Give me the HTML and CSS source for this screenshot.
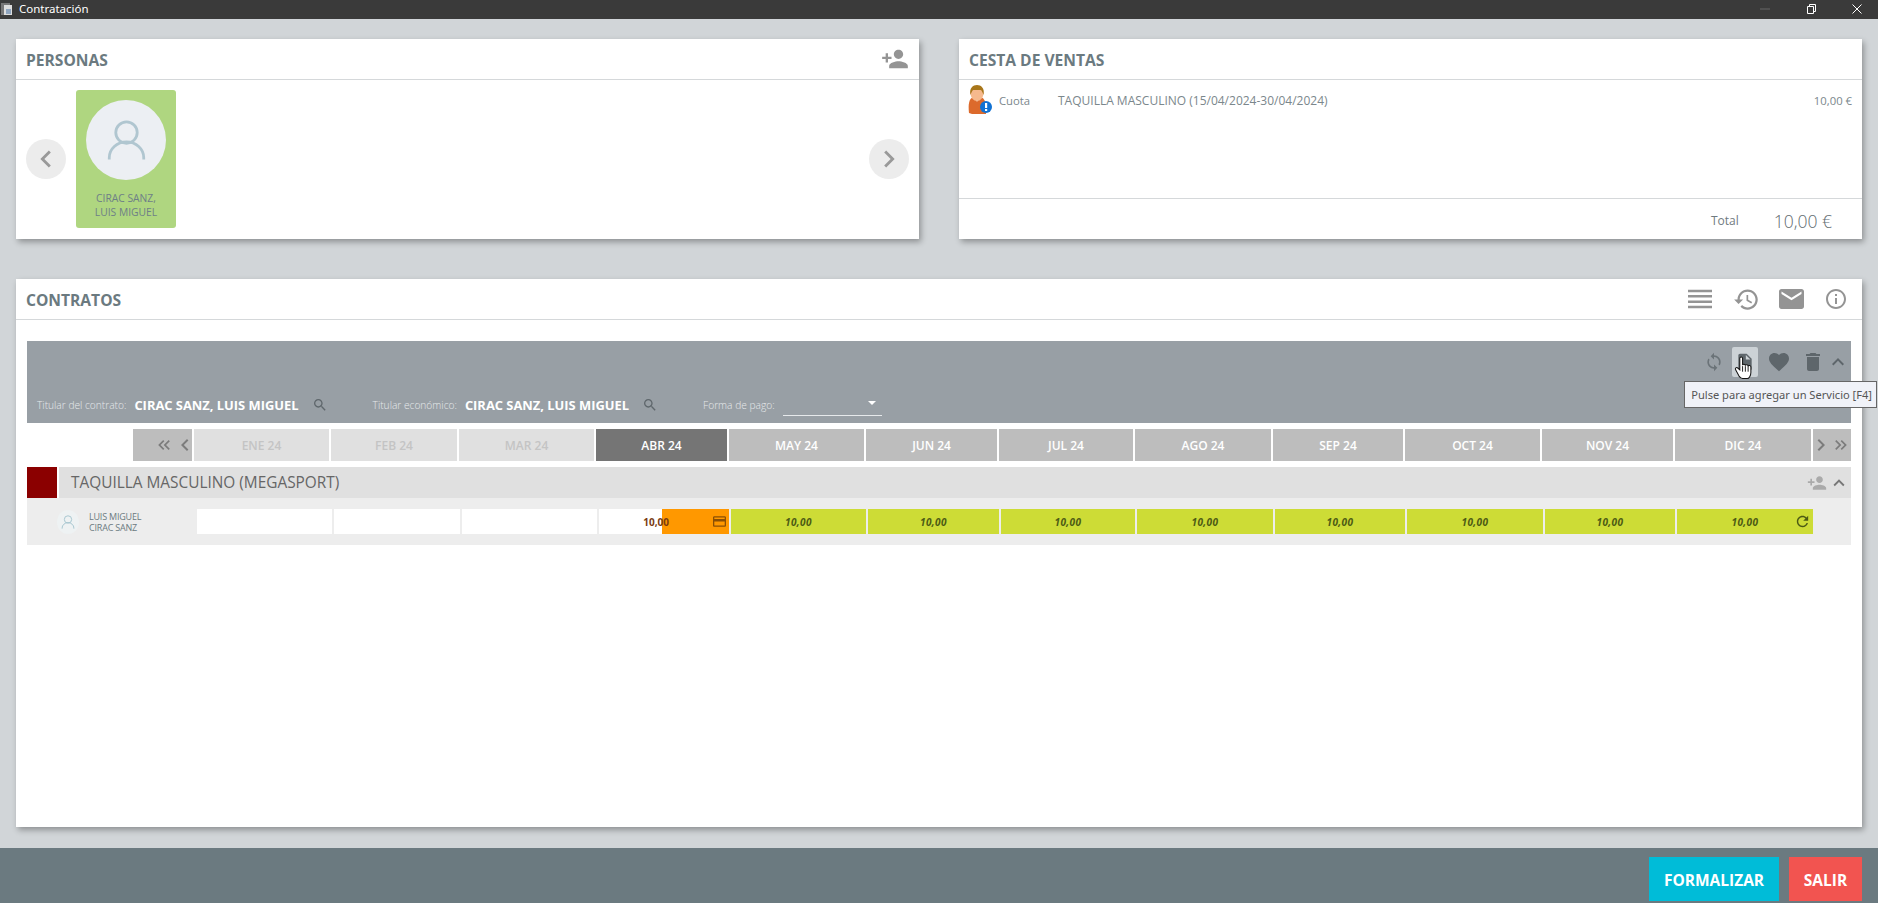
FILE: index.html
```html
<!DOCTYPE html>
<html lang="es">
<head>
<meta charset="utf-8"/>
<title>Contratación</title>
<link rel="stylesheet" href="styles.css">
</head>
<body>
<svg class="sprite" width="0" height="0">
    <symbol id="i-add" viewBox="0 0 24 24"><path d="M15 12c2.21 0 4-1.79 4-4s-1.79-4-4-4-4 1.79-4 4 1.79 4 4 4zm-9-2V7H4v3H1v2h3v3h2v-3h3v-2H6zm9 4c-2.67 0-8 1.34-8 4v2h16v-2c0-2.66-5.33-4-8-4z"/></symbol>
    <symbol id="i-history" viewBox="0 0 24 24"><path d="M13 3c-4.97 0-9 4.03-9 9H1l3.89 3.89.07.14L9 12H6c0-3.87 3.13-7 7-7s7 3.13 7 7-3.13 7-7 7c-1.93 0-3.68-.79-4.94-2.06l-1.42 1.42C8.27 19.99 10.51 21 13 21c4.97 0 9-4.03 9-9s-4.03-9-9-9zm-1 5v5l4.28 2.54.72-1.21-3.5-2.08V8H12z"/></symbol>
    <symbol id="i-mail" viewBox="2 4 20 16"><path d="M20 4H4c-1.1 0-1.99.9-1.99 2L2 18c0 1.1.9 2 2 2h16c1.1 0 2-.9 2-2V6c0-1.1-.9-2-2-2zm0 4l-8 5-8-5V6l8 5 8-5v2z"/></symbol>
    <symbol id="i-info" viewBox="2 2 20 20"><path d="M11 17h2v-6h-2v6zm1-15C6.48 2 2 6.48 2 12s4.48 10 10 10 10-4.48 10-10S17.52 2 12 2zm0 18c-4.41 0-8-3.59-8-8s3.59-8 8-8 8 3.59 8 8-3.59 8-8 8zM11 9h2V7h-2v2z"/></symbol>
    <symbol id="i-sync" viewBox="0 0 24 24"><path d="M12 4V1L8 5l4 4V6c3.31 0 6 2.69 6 6 0 1.01-.25 1.97-.7 2.8l1.46 1.46C19.54 15.03 20 13.57 20 12c0-4.42-3.58-8-8-8zm0 14c-3.31 0-6-2.69-6-6 0-1.01.25-1.97.7-2.8L5.24 7.74C4.46 8.97 4 10.43 4 12c0 4.42 3.58 8 8 8v3l4-4-4-4v3z"/></symbol>
    <symbol id="i-doc" viewBox="0 0 24 24"><path d="M6 2c-1.1 0-1.99.9-1.99 2L4 20c0 1.1.89 2 1.99 2H18c1.1 0 2-.9 2-2V8l-6-6H6zm7 7V3.5L18.5 9H13z"/></symbol>
    <symbol id="i-heart" viewBox="0 0 24 24"><path d="M12 21.35l-1.45-1.32C5.4 15.36 2 12.28 2 8.5 2 5.42 4.42 3 7.5 3c1.74 0 3.41.81 4.5 2.09C13.09 3.81 14.76 3 16.5 3 19.58 3 22 5.42 22 8.5c0 3.78-3.4 6.86-8.55 11.54L12 21.35z"/></symbol>
    <symbol id="i-trash" viewBox="0 0 24 24"><path d="M6 19c0 1.1.9 2 2 2h8c1.1 0 2-.9 2-2V7H6v12zM19 4h-3.5l-1-1h-5l-1 1H5v2h14V4z"/></symbol>
    <symbol id="i-up" viewBox="0 0 24 24"><path d="M7.41 15.41L12 10.83l4.59 4.58L18 14l-6-6-6 6z"/></symbol>
    <symbol id="i-left" viewBox="0 0 24 24"><path d="M15.41 7.41L14 6l-6 6 6 6 1.41-1.41L10.83 12z"/></symbol>
    <symbol id="i-right" viewBox="0 0 24 24"><path d="M8.59 16.59L10 18l6-6-6-6-1.41 1.41L13.17 12z"/></symbol>
    <symbol id="i-dleft" viewBox="0 0 24 24"><path d="M17.59 18L19 16.59 14.42 12 19 7.41 17.59 6l-6 6zM11 18l1.41-1.41L7.83 12l4.58-4.59L11 6l-6 6z"/></symbol>
    <symbol id="i-dright" viewBox="0 0 24 24"><path d="M6.41 6L5 7.41 9.58 12 5 16.59 6.41 18l6-6zM13 6l-1.41 1.41L16.17 12l-4.58 4.59L13 18l6-6z"/></symbol>
    <symbol id="i-card" viewBox="2 4 20 16"><path d="M20 4H4c-1.11 0-1.99.89-1.99 2L2 18c0 1.11.89 2 2 2h16c1.11 0 2-.89 2-2V6c0-1.11-.89-2-2-2zm0 14H4v-6h16v6zm0-10H4V6h16v2z"/></symbol>
    <symbol id="i-refresh" viewBox="0 0 24 24"><path d="M17.65 6.35C16.2 4.9 14.21 4 12 4c-4.42 0-7.99 3.58-7.99 8s3.57 8 7.99 8c3.73 0 6.84-2.55 7.73-6h-2.08c-.82 2.33-3.04 4-5.65 4-3.31 0-6-2.69-6-6s2.69-6 6-6c1.66 0 3.14.69 4.22 1.78L13 11h7V4l-2.35 2.35z"/></symbol>
    <symbol id="i-search" viewBox="0 0 24 24"><path d="M15.5 14h-.79l-.28-.27C15.41 12.59 16 11.11 16 9.5 16 5.91 13.09 3 9.5 3S3 5.91 3 9.5 5.91 16 9.5 16c1.61 0 3.09-.59 4.23-1.57l.27.28v.79l5 4.99L20.49 19l-4.99-5zm-6 0C7.01 14 5 11.99 5 9.5S7.01 5 9.5 5 14 7.01 14 9.5 11.99 14 9.5 14z"/></symbol>
    <symbol id="i-user" viewBox="0 0 44 44"><circle cx="22" cy="14" r="11.5" fill="none" stroke="currentColor" stroke-width="3"/><path d="M3.5 43v-2a18.500 17 0 0 1 37 0v2" fill="none" stroke="currentColor" stroke-width="3"/></symbol>
</svg>

<header class="titlebar">
    <svg class="app_ico" viewBox="0 0 12 14"><rect x="0" y="1" width="9" height="12" fill="#777"/><rect x="3" y="3" width="8" height="10" fill="#ddd"/><rect x="5" y="7" width="5" height="5" fill="#8fa5bf"/></svg>
    <span class="app_name">Contratación</span>
    <div class="win_btns">
        <svg class="win_ico" viewBox="0 0 10 10"><path d="M0 5h10" stroke="#666"/></svg>
        <svg class="win_ico" viewBox="0 0 10 10"><path d="M1.500 2.500h6v7h-6zM3.500 2.500v-2h6v7h-2" fill="none" stroke="#fff"/></svg>
        <svg class="win_ico" viewBox="0 0 10 10"><path d="M0.500 0.500l9 9M9.500 0.500l-9 9" stroke="#fff"/></svg>
    </div>
</header>

<main class="main">
    <div class="top_row">
        <section class="panel">
            <div class="panel_head">
                <h2>PERSONAS</h2>
                <svg class="head_ico add_ico"><use href="#i-add"/></svg>
            </div>
            <div class="personas">
                <button class="round_btn"><svg><use href="#i-left"/></svg></button>
                <div class="persona_list">
                    <div class="persona">
                        <div class="persona_pic"><svg><use href="#i-user"/></svg></div>
                        <div class="persona_name">CIRAC SANZ,<br>LUIS MIGUEL</div>
                    </div>
                </div>
                <button class="round_btn"><svg><use href="#i-right"/></svg></button>
            </div>
        </section>

        <section class="panel">
            <div class="panel_head">
                <h2>CESTA DE VENTAS</h2>
            </div>
            <div class="cesta">
                <div class="cesta_line">
                    <svg class="cesta_ico" viewBox="0 0 24 30">
                        <path d="M1 28c-1-9 0-14 4-16h8c4 2 5 6 5 10v7H4z" fill="#dc6a2c"/>
                        <path d="M6 12h6l-3 5z" fill="#f3d6c4"/>
                        <ellipse cx="9" cy="8.500" rx="6.500" ry="7.500" fill="#f6b98d"/>
                        <path d="M2.500 10C1 3 5 0 9 0s8 3 6.500 10c-1-3-2-5-3-5h-7c-1 0-2 2-3 5z" fill="#a8761a"/>
                        <circle cx="18" cy="22" r="6" fill="#1272d3"/>
                        <rect x="17" y="18" width="2.200" height="5" fill="#fff"/>
                        <rect x="17" y="24" width="2.200" height="2" fill="#fff"/>
                    </svg>
                    <span class="cesta_tipo">Cuota</span>
                    <span class="cesta_desc">TAQUILLA MASCULINO (15/04/2024-30/04/2024)</span>
                    <span class="cesta_imp">10,00 €</span>
                </div>
            </div>
            <div class="cesta_total">
                <span class="total_lbl">Total</span>
                <span class="total_num">10,00 €</span>
            </div>
        </section>
    </div>

    <section class="panel contratos">
        <div class="panel_head">
            <h2>CONTRATOS</h2>
            <div class="head_tools">
                <svg class="head_ico menu_ico" viewBox="0 0 24 20"><path d="M0 2h24M0 7.300h24M0 12.700h24M0 18h24" stroke="currentColor" stroke-width="2.600"/></svg>
                <svg class="head_ico hist_ico"><use href="#i-history"/></svg>
                <svg class="head_ico mail_ico"><use href="#i-mail"/></svg>
                <svg class="head_ico info_ico"><use href="#i-info"/></svg>
            </div>
        </div>
        <div class="contratos_body">
            <div class="contrato_bar">
                <div class="bar_tools">
                    <svg class="tool sync_tool"><use href="#i-sync"/></svg>
                    <span class="tool_box"><svg class="tool"><use href="#i-doc"/></svg></span>
                    <svg class="tool heart_tool"><use href="#i-heart"/></svg>
                    <svg class="tool trash_tool"><use href="#i-trash"/></svg>
                    <svg class="tool up_tool"><use href="#i-up"/></svg>
                </div>
                <div class="bar_fields">
                    <span class="fld_lbl">Titular del contrato:</span>
                    <strong class="fld_val">CIRAC SANZ, LUIS MIGUEL</strong>
                    <svg class="fld_search"><use href="#i-search"/></svg>
                    <span class="fld_lbl fld_2">Titular económico:</span>
                    <strong class="fld_val">CIRAC SANZ, LUIS MIGUEL</strong>
                    <svg class="fld_search"><use href="#i-search"/></svg>
                    <span class="fld_lbl fld_2">Forma de pago:</span>
                    <span class="fld_select"></span>
                </div>
                <svg class="hand" viewBox="0 0 20 26">
                    <path d="M6 2.500c0-2 3-2 3 0V10c0-1.500 3-1.500 3 .5 0-1.500 3-1.500 3 .5 .5-1 3-1 3 1v6c0 3-2 6.500-4 6.500H9c-2 0-3-1.500-4-3L1.500 15c-1-1.500.8-3.200 2.300-2L6 15z" fill="#fff" stroke="#111" stroke-width="1.100"/>
                    <path d="M9 11v6M12 11v6M15 11v6" stroke="#111" fill="none"/>
                </svg>
                <div class="tooltip">Pulse para agregar un Servicio [F4]</div>
            </div>

            <div class="months">
                <div class="m_nav m_nav_l"><svg class="n_two"><use href="#i-dleft"/></svg><svg class="n_one"><use href="#i-left"/></svg></div>
                <div class="m m_off">ENE 24</div>
                <div class="m m_off">FEB 24</div>
                <div class="m m_off">MAR 24</div>
                <div class="m m_on">ABR 24</div>
                <div class="m">MAY 24</div>
                <div class="m">JUN 24</div>
                <div class="m">JUL 24</div>
                <div class="m">AGO 24</div>
                <div class="m">SEP 24</div>
                <div class="m">OCT 24</div>
                <div class="m">NOV 24</div>
                <div class="m">DIC 24</div>
                <div class="m_nav m_nav_r"><svg class="n_one"><use href="#i-right"/></svg><svg class="n_two"><use href="#i-dright"/></svg></div>
            </div>

            <div class="servicio">
                <span class="serv_color"></span>
                <div class="serv_title">
                    <span>TAQUILLA MASCULINO (MEGASPORT)</span>
                    <svg class="serv_add"><use href="#i-add"/></svg>
                    <svg class="serv_up"><use href="#i-up"/></svg>
                </div>
            </div>

            <div class="linea">
                <div class="linea_user">
                    <span class="linea_pic"><svg><use href="#i-user"/></svg></span>
                    <span class="linea_name">LUIS MIGUEL<br>CIRAC SANZ</span>
                </div>
                <div class="cells">
                    <div class="cell"></div>
                    <div class="cell"></div>
                    <div class="cell"></div>
                    <div class="cell cell_abr">
                        <span class="abr_num">10,00</span>
                        <span class="abr_pay"><svg><use href="#i-card"/></svg></span>
                    </div>
                    <div class="cell cell_ok">10,00</div>
                    <div class="cell cell_ok">10,00</div>
                    <div class="cell cell_ok">10,00</div>
                    <div class="cell cell_ok">10,00</div>
                    <div class="cell cell_ok">10,00</div>
                    <div class="cell cell_ok">10,00</div>
                    <div class="cell cell_ok">10,00</div>
                    <div class="cell cell_ok">10,00<svg class="cell_renew"><use href="#i-refresh"/></svg></div>
                </div>
            </div>
        </div>
    </section>
</main>

<footer class="footer">
    <button class="btn btn_form">FORMALIZAR</button>
    <button class="btn btn_salir">SALIR</button>
</footer>
</body>
</html>
```

FILE: styles.css
```css
*{margin:0;padding:0;box-sizing:border-box;}
html,body{height:100%;}
body{
    display:flex;flex-direction:column;
    overflow:hidden;
    background:#d1d5d8;
    font-family:"Open Sans","Noto Sans",sans-serif;
    color:#6b7a80;}
.sprite{position:absolute;}
svg{display:block;fill:currentColor;}
button{border:0;font-family:inherit;}

/* title bar */
.titlebar{
    flex:none;
    display:flex;align-items:center;
    height:19px;
    padding-bottom:2px;
    background:#3a3a3a;
    color:#fff;}
.app_ico{width:12px;height:14px;margin:0 6px 0 1px;}
.app_name{font-family:"Noto Sans",sans-serif;font-size:11.500px;}
.win_btns{display:flex;gap:36px;margin-left:auto;margin-right:16px;}
.win_ico{width:10px;height:10px;}

/* panels */
.main{
    flex:1;
    display:flex;flex-direction:column;gap:40px;
    min-height:0;
    padding:20px 16px 21px;}
.top_row{
    flex:none;
    display:grid;grid-template-columns:903px 903px;gap:40px;
    height:200px;}
.panel{
    display:flex;flex-direction:column;
    background:#fff;
    box-shadow:2px 3px 6px rgba(0,0,0,.32);}
.panel_head{
    flex:none;
    display:flex;justify-content:space-between;align-items:center;
    height:41px;
    padding:0 10px;
    border-bottom:1px solid #d5d8da;}
.panel_head h2{padding-top:2px;font-size:15.600px;font-weight:700;color:#6b7a80;}
.head_ico{color:#949494;}
.add_ico{width:28px;height:28px;}

/* personas */
.personas{
    flex:1;
    display:flex;align-items:center;
    padding:0 10px 1px;}
.round_btn{
    flex:none;
    display:flex;justify-content:center;align-items:center;
    width:40px;height:40px;
    background:#ececec;
    border-radius:50%;
    color:#999;}
.round_btn svg{width:34px;height:34px;}
.persona_list{flex:1;padding-left:10px;}
.persona{
    width:100px;height:138px;
    padding-top:10px;
    background:#afd680;
    border-radius:3px;
    text-align:center;}
.persona_pic{
    display:flex;justify-content:center;align-items:center;
    width:80px;height:80px;
    margin:0 auto 11px;
    background:#eceff3;
    border-radius:50%;
    color:#b0c6d0;}
.persona_pic svg{width:41px;height:44px;}
.persona_name{font-size:10.300px;line-height:14px;color:#6e7f87;}

/* cesta */
.cesta{flex:1;padding:5px 10px 0 9px;}
.cesta_line{
    display:flex;align-items:flex-start;
    font-size:11.300px;
    color:#7b878c;}
.cesta_ico{flex:none;width:24px;height:30px;margin-right:7px;}
.cesta_tipo{width:59px;padding-top:8px;}
.cesta_desc{flex:1;padding-top:7px;font-size:12px;}
.cesta_imp{padding-top:8px;}
.cesta_total{
    flex:none;
    display:flex;justify-content:flex-end;align-items:center;gap:35px;
    height:41px;
    padding:3px 30px 0 0;
    border-top:1px solid #d5d8da;
    color:#6f7b80;}
.total_lbl{font-size:12px;}
.total_num{font-size:17.500px;font-weight:300;color:#5f6b70;}

/* contratos */
.contratos{flex:1;min-height:0;}
.head_tools{display:flex;align-items:center;padding-right:6px;}
.menu_ico{width:24px;height:20px;}
.hist_ico{width:27px;height:27px;margin-left:21px;}
.mail_ico{width:25px;height:20px;margin-left:19px;}
.info_ico{width:20px;height:20px;margin-left:22px;}
.contratos_body{padding:21px 11px 0;}

.contrato_bar{
    position:relative;
    display:flex;flex-direction:column;justify-content:space-between;
    height:82px;
    padding:6px 1px 6px 10px;
    background:#989fa5;}
.bar_tools{display:flex;justify-content:flex-end;align-items:center;height:30px;color:#5e666b;}
.tool{width:20px;height:20px;}
.sync_tool{color:#6b7378;}
.tool_box{
    display:flex;justify-content:center;align-items:center;
    width:26px;height:30px;
    margin-left:8px;
    background:#ccd2d6;
    border-radius:2px;}
.heart_tool{width:24px;height:24px;margin-left:9px;}
.trash_tool{width:24px;height:24px;margin-left:10px;}
.up_tool{width:24px;height:24px;margin-left:1px;}

.bar_fields{display:flex;align-items:center;height:24px;color:#e6e9eb;}
.fld_lbl{font-size:10.200px;font-weight:300;margin-right:8px;}
.fld_val{font-size:12.900px;font-weight:700;color:#fff;white-space:nowrap;}
.fld_search{width:16px;height:16px;margin-left:13px;color:#5f676c;}
.fld_2{margin-left:45px;}
.fld_select{
    position:relative;
    width:99px;height:22px;
    border-bottom:1px solid #e6e9eb;}
.fld_select::after{
    content:"";
    position:absolute;right:6px;top:7px;
    border:4px solid transparent;border-top-color:#fff;}

.hand{position:absolute;right:98px;top:15px;width:19px;height:24px;}
.tooltip{
    position:absolute;right:-26px;top:40px;
    height:27px;
    padding:0 4px 0 6px;
    background:#f0f2f8;
    border:1px solid #666;
    font-family:"Noto Sans",sans-serif;font-size:11.100px;line-height:25px;
    white-space:nowrap;
    color:#555;}

/* meses */
.months{
    display:grid;
    grid-template-columns:59px 135px 126px 135px 131px 135px 131px 134px 136px 130px 135px 131px 136px 38px;
    gap:2px;
    height:32px;
    margin:6px 0;
    padding-left:106px;}
.m{
    display:flex;justify-content:center;align-items:center;
    background:#bdbdbd;
    font-size:12px;font-weight:600;
    color:#fff;}
.m_off{background:#e0e0e0;color:#c4c4c4;}
.m_on{background:#757575;}
.m_nav{display:flex;align-items:center;background:#bdbdbd;color:#7c7c7c;}
.n_one{flex:none;width:24px;height:24px;}
.n_two{flex:none;width:20px;height:20px;}
.m_nav_l{justify-content:flex-end;}
.m_nav_l .n_one{margin:0 -5px 0 -1px;}
.m_nav_r .n_one{margin-left:-4px;}
.m_nav_r .n_two{margin-left:-2px;}

/* servicio */
.servicio{display:flex;gap:2px;height:31px;}
.serv_color{flex:none;width:30px;background:#8b0000;}
.serv_title{
    flex:1;
    display:flex;align-items:center;
    padding:0 1px 0 12px;
    background:#e0e0e0;
    font-size:15.400px;
    color:#666;}
.serv_title span{flex:1;}
.serv_add{width:20px;height:20px;color:#aaa;}
.serv_up{width:22px;height:22px;margin-left:1px;color:#777;}

.linea{
    display:flex;align-items:center;
    height:47px;
    background:#ededed;}
.linea_user{flex:none;display:flex;align-items:center;width:170px;padding-left:30px;}
.linea_pic{
    display:flex;justify-content:center;align-items:center;
    width:22px;height:24px;
    margin-right:10px;
    background:#eef2f3;
    border-radius:50%;
    color:#a6c5cf;}
.linea_pic svg{width:14px;height:20px;}
.linea_name{font-size:9px;line-height:11px;letter-spacing:-.2px;color:#6b7a80;}
.cells{display:flex;gap:2px;}
.cell{
    position:relative;
    display:flex;justify-content:center;align-items:center;
    height:25px;
    background:#fff;}
.cell:nth-child(1),.cell:nth-child(3),.cell:nth-child(5){width:135px;}
.cell:nth-child(2){width:126px;}
.cell:nth-child(4),.cell:nth-child(9),.cell:nth-child(11){width:130px;}
.cell:nth-child(6){width:131px;}
.cell:nth-child(7){width:134px;}
.cell:nth-child(8),.cell:nth-child(10),.cell:nth-child(12){width:136px;}
.cell_ok{
    background:#cddc36;
    font-size:10px;font-weight:700;font-style:italic;letter-spacing:.4px;
    color:#4c5a14;}
.cell_renew{position:absolute;right:2px;top:4px;width:17px;height:17px;color:#4c5a14;}
.cell_abr{justify-content:flex-end;}
.abr_num{
    position:relative;z-index:1;
    margin-right:-7px;
    font-size:10px;font-weight:700;
    color:#7a3b12;}
.abr_pay{
    display:flex;justify-content:flex-end;align-items:center;
    width:67px;height:100%;
    padding-right:3px;
    background:#ff9800;
    color:#8a4f05;}
.abr_pay svg{width:13px;height:11px;}

/* footer */
.footer{
    flex:none;
    display:flex;justify-content:flex-end;gap:10px;
    height:55px;
    padding:9px 16px 2px;
    background:#6b7a80;}
.btn{
    height:44px;
    padding-top:1px;
    font-size:15.500px;font-weight:700;
    color:#fff;}
.btn_form{width:130px;background:#00bcd8;}
.btn_salir{width:73px;background:#f25450;}
```
